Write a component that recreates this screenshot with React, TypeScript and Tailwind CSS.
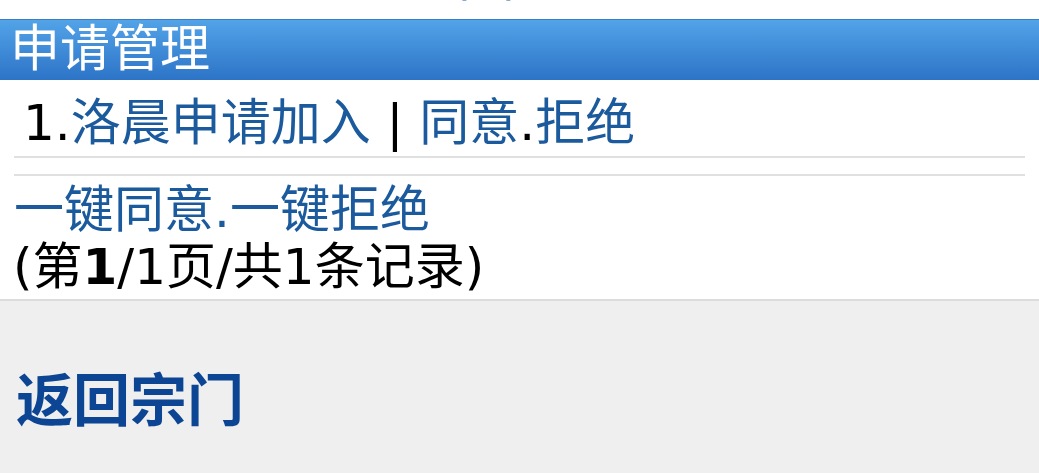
import React from "react";

const font = { fontFamily: '"DejaVu Sans", "Noto Sans CJK SC", sans-serif' };

export default function App() {
  return (
    <div className="w-[1039px] h-[473px] overflow-hidden bg-white font-['DejaVu_Sans','Noto_Sans_CJK_SC',sans-serif]" style={font}>
      <div className="h-[19px] overflow-hidden">
        <div className="-mt-[51px] px-[1px] text-[50px] leading-[56px] text-[#1b5a9c]">查看本宗门全部成员(1)</div>
      </div>
      <div className="h-[61px] border-t border-[#3a7fc6] bg-gradient-to-b from-[#52a3e8] to-[#2d74c7] px-[10px] text-[50px] leading-[58px] text-white">
        申请管理
      </div>
      <div className="mx-[14px] border-b-2 border-[#e0e0e0] pl-[9px] pt-[14px] pb-[4px] text-[50px] leading-[58px] text-black">
        1.<span className="text-[#1b5a9c]">洛晨申请加入</span> | <span className="text-[#1b5a9c]">同意</span>.<span className="text-[#1b5a9c]">拒绝</span>
      </div>
      <div className="mx-[14px] mt-[16px] border-t-2 border-[#e0e0e0]"></div>
      <div className="px-[14px] pt-[6px] text-[50px] leading-[56px] text-[#1b5a9c]">
        一键同意.一键拒绝
      </div>
      <div className="px-[13px] pt-[1px] text-[50px] leading-[56px] text-black">
        (第<b>1</b>/1页/共1条记录)
      </div>
      <div className="mt-[4px] h-[200px] border-t-2 border-[#dcdcdc] bg-[#efefef] px-[16px] pt-[65px]">
        <div className="text-[57px] leading-[70px] font-bold text-[#0b4593]">返回宗门</div>
      </div>
    </div>
  );
}
